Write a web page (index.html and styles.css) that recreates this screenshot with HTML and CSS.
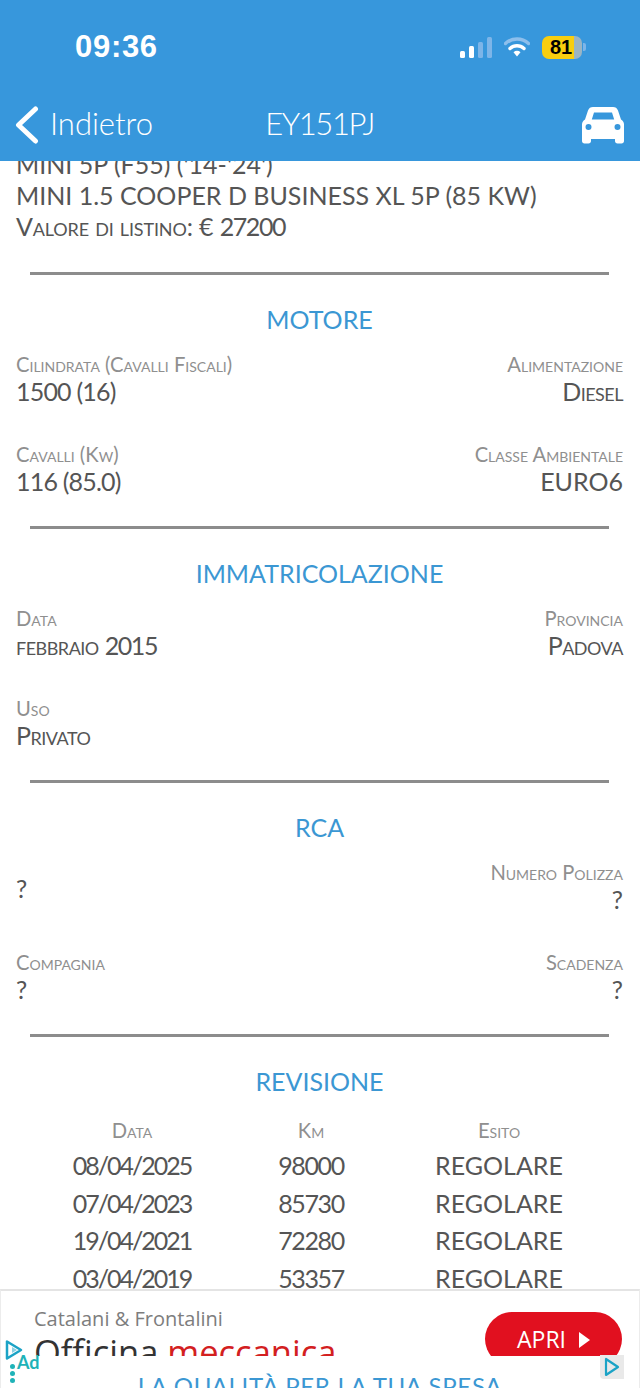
FILE: index.html
```html
<!DOCTYPE html>
<html lang="it">
<head>
<meta charset="utf-8">
<title>EY151PJ</title>
<link rel="stylesheet" href="styles.css">
</head>
<body>
<div class="app">
  <header class="header">
    <div class="status">
      <span class="time">09:36</span>
      <div class="status-icons">
        <svg class="signal" width="32" height="22" viewBox="0 0 32 22"><rect x="0" y="14" width="5" height="7" rx="1.5" fill="#fff"/><rect x="9" y="9" width="5" height="12" rx="1.5" fill="#fff"/><rect x="18" y="5" width="5" height="16" rx="1.5" fill="#7db5e8"/><rect x="27" y="0" width="5" height="21" rx="1.5" fill="#7db5e8"/></svg>
        <svg class="wifi" width="26" height="20" viewBox="0 0 26 20"><path d="M1.5 6.5C8 .5 18 .5 24.500 6.500" fill="none" stroke="#8dbfec" stroke-width="3.400" stroke-linecap="round"/><path d="M6 11.500c4-3.700 10-3.700 14 0" fill="none" stroke="#fff" stroke-width="3.400" stroke-linecap="round"/><path d="M9.500 15.200c2-1.800 5-1.800 7 0L13 19.500z" fill="#fff"/></svg>
        <div class="battery"><span class="battery-fill">81</span><span class="battery-rest"></span><span class="battery-cap"></span></div>
      </div>
    </div>
    <nav class="nav">
      <div class="back">
        <svg width="24" height="38" viewBox="0 0 24 38"><path d="M20.500 3 3.500 19l17 16" fill="none" stroke="#fff" stroke-width="5" stroke-linecap="round" stroke-linejoin="round"/></svg>
        <span class="nav-text">Indietro</span>
      </div>
      <div class="title nav-text">EY151PJ</div>
      <svg class="car" width="42" height="38" viewBox="0 0 42 38"><path fill-rule="evenodd" fill="#fff" d="M11 1h20c2.500 0 4 1 5 3.500l3 9c2 1 3 3 3 5V35c0 1.500-1 2.500-2.500 2.500h-4c-1.500 0-2.500-1-2.500-2.500v-2H9v2c0 1.500-1 2.500-2.500 2.500h-4C1 37.500 0 36.500 0 35V18.500c0-2 1-4 3-5l3-9C7 2 8.500 1 11 1zM12 6.500 9.800 13.500h22.400L30 6.500zM6.500 18a3 3 0 1 0 0 6 3 3 0 0 0 0-6zM35.500 18a3 3 0 1 0 0 6 3 3 0 0 0 0-6z"/></svg>
    </nav>
  </header>

  <main class="content">
    <section class="intro">
      <div class="line">MINI 5P (F55) ('14-'24')</div>
      <div class="line">MINI 1.5 COOPER D BUSINESS XL 5P (85 KW)</div>
      <div class="line sc-line">Valore di listino: € <span class="num">27200</span></div>
    </section>
    <hr class="rule">
    <h2 class="heading">MOTORE</h2>
    <section class="fields">
      <div class="field"><div class="label">Cilindrata (Cavalli Fiscali)</div><div class="value tight">1500 (16)</div></div>
      <div class="field right"><div class="label">Alimentazione</div><div class="value sc">Diesel</div></div>
      <div class="field"><div class="label">Cavalli (Kw)</div><div class="value tight">116 (85.0)</div></div>
      <div class="field right"><div class="label">Classe Ambientale</div><div class="value">EURO6</div></div>
    </section>
    <hr class="rule">
    <h2 class="heading">IMMATRICOLAZIONE</h2>
    <section class="fields">
      <div class="field"><div class="label">Data</div><div class="value sc">febbraio <span class="num">2015</span></div></div>
      <div class="field right"><div class="label">Provincia</div><div class="value sc">Padova</div></div>
      <div class="field"><div class="label">Uso</div><div class="value sc">Privato</div></div>
      <div class="field right"></div>
    </section>
    <hr class="rule">
    <h2 class="heading">RCA</h2>
    <section class="fields">
      <div class="field"><div class="label empty"></div><div class="value">?</div></div>
      <div class="field right"><div class="label">Numero Polizza</div><div class="value">?</div></div>
      <div class="field"><div class="label">Compagnia</div><div class="value">?</div></div>
      <div class="field right"><div class="label">Scadenza</div><div class="value">?</div></div>
    </section>
    <hr class="rule">
    <h2 class="heading">REVISIONE</h2>
    <section class="table">
      <div class="label">Data</div><div class="label">Km</div><div class="label">Esito</div>
      <div class="date">08/04/2025</div><div class="num">98000</div><div>REGOLARE</div>
      <div class="date">07/04/2023</div><div class="num">85730</div><div>REGOLARE</div>
      <div class="date">19/04/2021</div><div class="num">72280</div><div>REGOLARE</div>
      <div class="date">03/04/2019</div><div class="num">53357</div><div>REGOLARE</div>
    </section>
  </main>

  <aside class="ad">
    <div class="ad-top">
      <div class="ad-text">
        <div class="ad-brand">Catalani &amp; Frontalini</div>
        <div class="ad-title">Officina <span class="red">meccanica</span></div>
      </div>
      <div class="ad-btn">APRI <svg width="12" height="16" viewBox="0 0 12 16"><path d="M1 0l11 8-11 8z" fill="#fff"/></svg></div>
    </div>
    <div class="ad-bottom"><div class="ad-slogan">LA QUALITÀ PER LA TUA SPESA</div></div>
    <svg class="adchoice-left" width="20" height="22" viewBox="0 0 20 22"><path d="M3 2.500v17l14-8.500z" fill="none" stroke="#1ba3c6" stroke-width="2.500" stroke-linejoin="round"/><path d="M8 8v6l5-3z" fill="#1ba3c6" opacity=".5"/></svg>
    <div class="adtag"><span class="dots"><i></i><i></i><i></i></span>Ad</div>
    <div class="adchoice-box"><svg width="16" height="20" viewBox="0 0 16 20"><path d="M2 2v16l12-8z" fill="none" stroke="#1ba3c6" stroke-width="2.200" stroke-linejoin="round"/></svg></div>
  </aside>
</div>
</body>
</html>
```

FILE: styles.css
```css
* { box-sizing: border-box; }
html, body { margin: 0; padding: 0; }
body { width: 640px; height: 1388px; overflow: hidden; background: #fff; font-family: "Lato", "Liberation Sans", sans-serif; color: #555; }
.app { display: flex; flex-direction: column; height: 1388px; position: relative; }

.header { height: 161px; flex: none; background: #3797dc; color: #fff; display: flex; flex-direction: column; position: relative; z-index: 2; }
.status { height: 100px; padding: 30px 53px 0 75px; display: flex; justify-content: space-between; align-items: flex-start; }
.time { font: 700 31px/34px "Liberation Sans", sans-serif; letter-spacing: .7px; }
.status-icons { display: flex; align-items: center; gap: 12px; height: 34px; }
.signal { margin-top: 1px; }
.battery { display: flex; align-items: stretch; height: 23px; width: 45px; }
.battery-fill { width: 32px; flex: none; background: #f8ce0f; color: #000; border-radius: 7px 0 0 7px; font: 700 20px/23px "Liberation Sans", sans-serif; padding-left: 8px; }
.battery-rest { width: 8px; background: #9ab5c4; border-radius: 0 7px 7px 0; }
.battery-cap { width: 3px; height: 8px; margin: 7px 0 0 1px; background: #7db5e8; border-radius: 0 2px 2px 0; }

.nav { display: grid; grid-template-columns: 1fr auto 1fr; align-items: center; height: 50px; padding: 0 16px 0 15px; }
.back { display: flex; align-items: center; gap: 11px; font-size: 31px; font-weight: 300; }
.nav-text { padding-bottom: 4px; }
.title { font-size: 31px; font-weight: 300; letter-spacing: -1.400px; }
.car { justify-self: end; }

.content { flex: 1; min-height: 0; overflow: hidden; padding: 0 17px 0 16px; }
.intro { margin-top: -12px; padding-bottom: 6px; }
.line { font-size: 25px; line-height: 31px; height: 31px; white-space: nowrap; }
.sc-line { font-variant: small-caps; letter-spacing: -.15px; }
.sc { font-variant: small-caps; letter-spacing: -.5px; }
.num { letter-spacing: -1.400px; }
.tight { letter-spacing: -.8px; }
.rule { border: 0; height: 3px; background: #8c8c8c; margin: 24px 14px 0; }
.heading { margin: 26px 0 15px; font-size: 25px; line-height: 36px; font-weight: 400; color: #3b97d3; text-align: center; }

.fields { display: grid; grid-template-columns: 1fr 1fr; row-gap: 30px; }
.field { height: 60px; white-space: nowrap; }
.right { text-align: right; }
.label { font-size: 20.200px; line-height: 24px; height: 24px; font-variant: small-caps; color: #8f8f8f; }
.label.empty { height: 13px; }
.value { font-size: 25px; line-height: 30px; height: 30px; color: #555; }

.table { display: grid; grid-template-columns: 224px 134px 242px; text-align: center; font-size: 25px; line-height: 37.500px; margin: 0 0 0 4px; width: 600px; }
.table .label { line-height: 33px; height: 33px; }
.date { letter-spacing: -2px; }

.ad { height: 99px; flex: none; position: relative; background: #fff; border-top: 2px solid #e4e4e4; border-left: 1px solid #ececec; border-right: 1px solid #ececec; overflow: hidden; }
.ad-top { height: 65px; padding: 16px 17px 0 33px; display: flex; justify-content: space-between; overflow: hidden; }
.ad-brand { font: 400 20px/24px "Open Sans", sans-serif; color: #7d7d7d; }
.ad-title { font: 400 34.500px/42px "Open Sans", sans-serif; color: #333; white-space: nowrap; }
.red { color: #d3201f; }
.ad-btn { width: 137px; height: 54px; margin-top: 5px; border-radius: 27px; background: #e1101f; color: #fff; font: 400 23px/54px "Open Sans", sans-serif; text-align: center; }
.ad-btn svg { margin-left: 6px; }
.ad-bottom { height: 32px; background: #fff; text-align: center; overflow: hidden; }
.ad-slogan { font: 400 24px/30px "Lato", sans-serif; letter-spacing: .7px; color: #3b97d3; margin-top: 15px; }
.adchoice-left { position: absolute; left: 3px; top: 48px; }
.adtag { position: absolute; left: 9px; top: 60px; font: 700 18px/22px "Lato", sans-serif; color: #1fb3b8; display: flex; align-items: flex-start; gap: 2px; }
.dots { display: flex; flex-direction: column; gap: 2px; margin-top: 13px; }
.dots i { width: 5px; height: 5px; border-radius: 50%; background: #1fb3b8; display: block; }
.adchoice-box { position: absolute; right: 15px; top: 64px; width: 24px; height: 24px; background: #e9e9e9; border-radius: 0 0 0 4px; display: flex; align-items: center; justify-content: center; }
```
